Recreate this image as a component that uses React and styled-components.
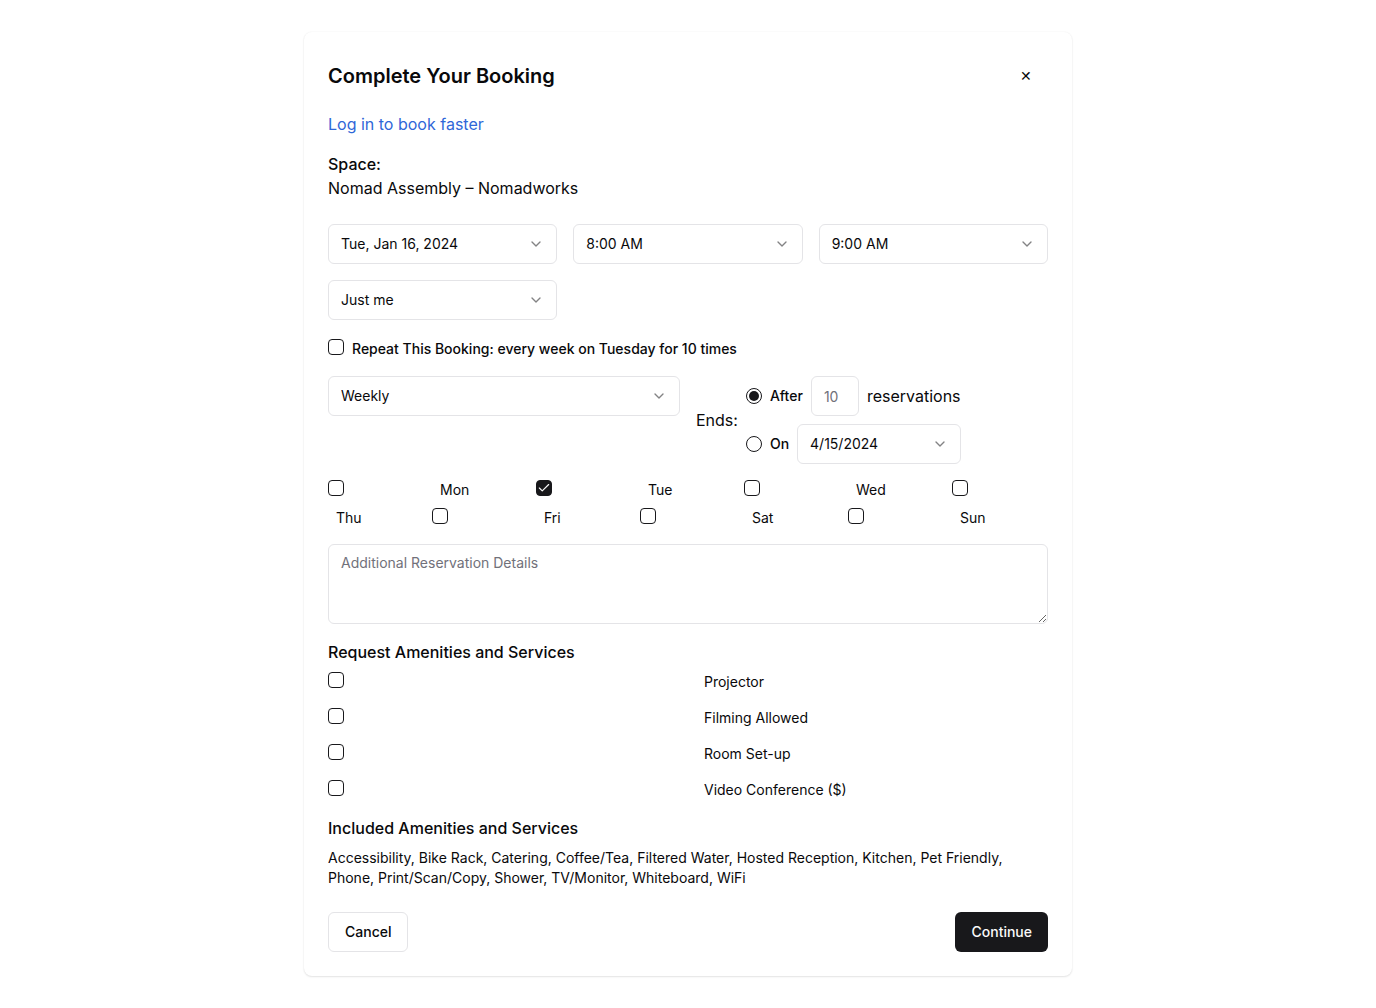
import React from "react";
import styled, { createGlobalStyle } from "styled-components";
import { Check, ChevronDown } from "lucide-react";

const GlobalStyle = createGlobalStyle`
  *, *::before, *::after { box-sizing: border-box; }
  body {
    margin: 0;
    background: #fff;
    color: #09090b;
    font-family: Inter, "Liberation Sans", sans-serif;
    font-size: 16px;
    line-height: 24px;
  }
  h2, h3, p { margin: 0; }
  button, input, select, textarea { font-family: inherit; color: inherit; margin: 0; }
`;

const Card = styled.form`
  max-width: 768px;
  margin: 32px auto;
  padding: 24px;
  border-radius: 8px;
  background: #fff;
  box-shadow: 0 1px 2px rgba(0, 0, 0, 0.1), 0 0 2px rgba(0, 0, 0, 0.06);
  display: flex;
  flex-direction: column;
  gap: 16px;
`;

const Header = styled.header`
  display: flex;
  align-items: center;
  justify-content: space-between;
`;

const Title = styled.h2`
  font-size: 20px;
  line-height: 28px;
  font-weight: 600;
`;

const Button = styled.button`
  height: 40px;
  padding: 0 16px;
  border: ${(p) => (p.$variant === "outline" ? "1px solid #e4e4e7" : "0")};
  border-radius: 6px;
  background: ${(p) => (p.$variant === "primary" ? "#18181b" : "transparent")};
  color: ${(p) => (p.$variant === "primary" ? "#fafafa" : "inherit")};
  font-size: 14px;
  line-height: 20px;
  font-weight: 500;
  cursor: pointer;
`;

const LoginLink = styled.a`
  align-self: flex-start;
  color: #2f67d8;
  text-decoration: none;
`;

const Space = styled.div`
  margin-bottom: 8px;
`;

const SectionTitle = styled.h3`
  font-size: 16px;
  line-height: 24px;
  font-weight: 500;
`;

const Columns = styled.div`
  display: grid;
  grid-template-columns: repeat(${(p) => p.$count}, minmax(0, 1fr));
  gap: ${(p) => p.$gap || 16}px;
`;

const SelectBox = styled.div`
  display: grid;
  grid-template-columns: minmax(0, 1fr);
  align-items: center;
  align-self: start;
  flex: 1;

  > * { grid-area: 1 / 1; }
  > svg {
    justify-self: end;
    margin-right: 13px;
    opacity: 0.5;
    pointer-events: none;
  }
`;

const SelectControl = styled.select`
  appearance: none;
  width: 100%;
  height: 40px;
  padding: 0 36px 0 12px;
  border: 1px solid #e4e4e7;
  border-radius: 6px;
  background: #fff;
  font-size: 14px;
  line-height: 20px;
`;

const Tick = styled.span`
  display: inline-grid;
  place-items: center;
  width: 16px;
  height: 16px;
  flex: none;

  > * { grid-area: 1 / 1; }
  > svg { color: #fafafa; visibility: hidden; pointer-events: none; }
  > input:checked + svg { visibility: visible; }
`;

const TickInput = styled.input`
  appearance: none;
  width: 16px;
  height: 16px;
  border: 1px solid #18181b;
  border-radius: 4px;
  &:checked { background: #18181b; }
`;

const Radio = styled.input`
  appearance: none;
  display: grid;
  place-items: center;
  width: 16px;
  height: 16px;
  flex: none;
  border: 1px solid #18181b;
  border-radius: 50%;
  &:checked::before {
    content: "";
    width: 10px;
    height: 10px;
    border-radius: 50%;
    background: #18181b;
  }
`;

const Label = styled.label`
  font-size: 14px;
  line-height: 20px;
  font-weight: ${(p) => (p.$medium ? 500 : 400)};
  margin-left: ${(p) => (p.$indent ? 8 : 0)}px;
`;

const RepeatRow = styled.div`
  display: flex;
  align-items: center;
  gap: 8px;
  height: 24px;
  > span { margin-bottom: 2px; }
  > label { margin-top: 2px; }
`;

const Ends = styled.div`
  display: flex;
  align-items: center;
  gap: 8px;
`;

const EndOptions = styled.div`
  display: flex;
  flex-direction: column;
  gap: 8px;
`;

const EndOption = styled.div`
  display: flex;
  align-items: center;
  gap: 8px;
`;

const CountInput = styled.input`
  width: 48px;
  height: 40px;
  padding: 0 12px;
  border: 1px solid #e4e4e7;
  border-radius: 6px;
  font-size: 14px;
  line-height: 20px;
  &::placeholder { color: #71717a; opacity: 1; }
`;

const Details = styled.textarea`
  display: block;
  width: 100%;
  height: 80px;
  padding: 8px 12px;
  border: 1px solid #e4e4e7;
  border-radius: 6px;
  font-size: 14px;
  line-height: 20px;
  resize: vertical;
  &::placeholder { color: #71717a; opacity: 1; }
`;

const Section = styled.section`
  display: flex;
  flex-direction: column;
  gap: 8px;
`;

const Included = styled.p`
  font-size: 14px;
  line-height: 20px;
`;

const Footer = styled.footer`
  display: flex;
  justify-content: space-between;
  margin-top: 8px;
`;

function Select({ label, value }) {
  return (
    <SelectBox>
      <SelectControl aria-label={label} defaultValue={value}>
        <option>{value}</option>
      </SelectControl>
      <ChevronDown size={16} aria-hidden="true" />
    </SelectBox>
  );
}

function Checkbox({ id, checked }) {
  return (
    <Tick>
      <TickInput type="checkbox" id={id} defaultChecked={checked} />
      <Check size={14} aria-hidden="true" />
    </Tick>
  );
}

function CheckItems({ items, selected }) {
  return items.map((item) => (
    <React.Fragment key={item}>
      <Checkbox id={item} checked={item === selected} />
      <Label htmlFor={item} $indent>{item}</Label>
    </React.Fragment>
  ));
}

const days = ["Mon", "Tue", "Wed", "Thu", "Fri", "Sat", "Sun"];
const requests = ["Projector", "Filming Allowed", "Room Set-up", "Video Conference ($)"];

export default function App() {
  return (
    <>
      <GlobalStyle />
      <Card onSubmit={(e) => e.preventDefault()}>
        <Header>
          <Title>Complete Your Booking</Title>
          <Button type="button" aria-label="Close">✕</Button>
        </Header>
        <LoginLink href="#">Log in to book faster</LoginLink>
        <Space>
          <SectionTitle>Space:</SectionTitle>
          <p>Nomad Assembly – Nomadworks</p>
        </Space>
        <Columns $count={3}>
          <Select label="Date" value="Tue, Jan 16, 2024" />
          <Select label="Start time" value="8:00 AM" />
          <Select label="End time" value="9:00 AM" />
          <Select label="Guests" value="Just me" />
        </Columns>
        <RepeatRow>
          <Checkbox id="repeat" />
          <Label htmlFor="repeat" $medium>
            Repeat This Booking: every week on Tuesday for 10 times
          </Label>
        </RepeatRow>
        <Columns $count={2}>
          <Select label="Frequency" value="Weekly" />
          <Ends role="radiogroup" aria-labelledby="ends">
            <span id="ends">Ends:</span>
            <EndOptions>
              <EndOption>
                <Radio type="radio" name="ends" id="after" defaultChecked />
                <Label htmlFor="after" $medium>After</Label>
                <CountInput placeholder="10" aria-label="Number of reservations" />
                <span>reservations</span>
              </EndOption>
              <EndOption>
                <Radio type="radio" name="ends" id="on" />
                <Label htmlFor="on" $medium>On</Label>
                <Select label="End date" value="4/15/2024" />
              </EndOption>
            </EndOptions>
          </Ends>
        </Columns>
        <Columns $count={7} $gap={8}>
          <CheckItems items={days} selected="Tue" />
        </Columns>
        <Details placeholder="Additional Reservation Details" aria-label="Additional Reservation Details" />
        <Section>
          <SectionTitle>Request Amenities and Services</SectionTitle>
          <Columns $count={2}>
            <CheckItems items={requests} />
          </Columns>
        </Section>
        <Section>
          <SectionTitle>Included Amenities and Services</SectionTitle>
          <Included>
            Accessibility, Bike Rack, Catering, Coffee/Tea, Filtered Water, Hosted Reception,
            Kitchen, Pet Friendly, Phone, Print/Scan/Copy, Shower, TV/Monitor, Whiteboard, WiFi
          </Included>
        </Section>
        <Footer>
          <Button type="button" $variant="outline">Cancel</Button>
          <Button type="submit" $variant="primary">Continue</Button>
        </Footer>
      </Card>
    </>
  );
}
